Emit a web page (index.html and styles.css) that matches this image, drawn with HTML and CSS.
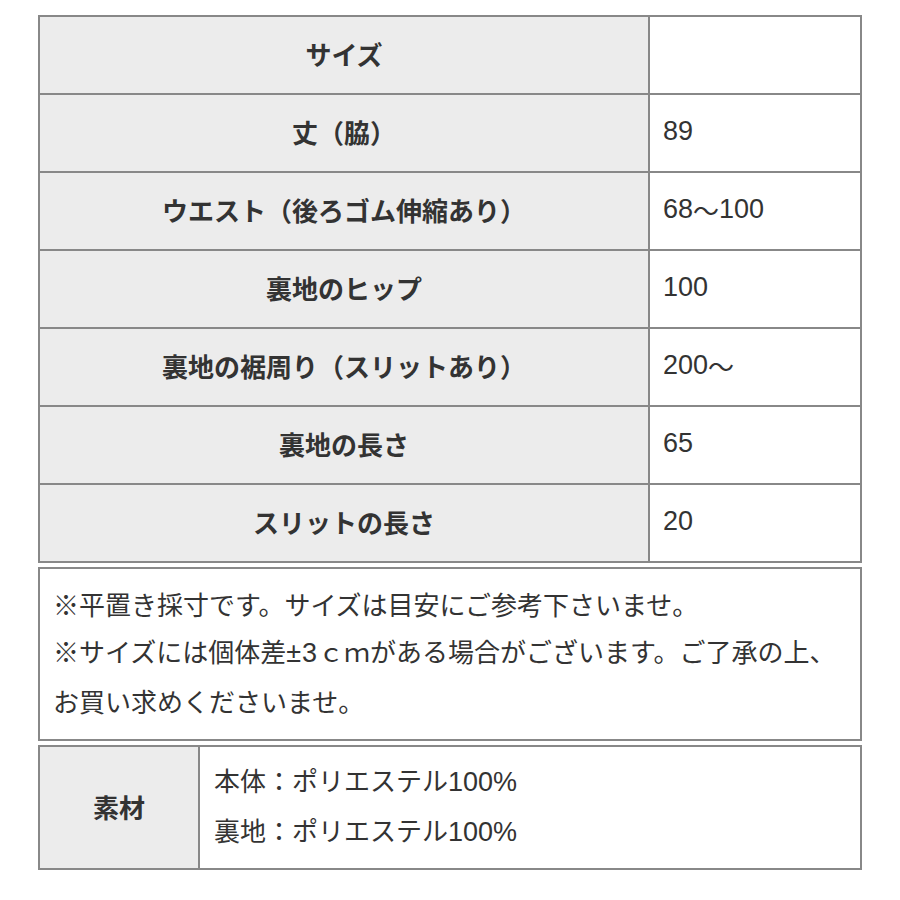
FILE: index.html
```html
<!DOCTYPE html>
<html lang="ja">
<head>
<meta charset="utf-8">
<link rel="stylesheet" href="styles.css">
</head>
<body>
<div class="page">
  <div class="size-grid">
    <div class="label">サイズ</div><div class="value"></div>
    <div class="label">丈（脇）</div><div class="value"><span class="num">89</span></div>
    <div class="label">ウエスト（後ろゴム伸縮あり）</div><div class="value"><span class="num">68</span>〜<span class="num">100</span></div>
    <div class="label">裏地のヒップ</div><div class="value"><span class="num">100</span></div>
    <div class="label">裏地の裾周り（スリットあり）</div><div class="value"><span class="num">200</span>〜</div>
    <div class="label">裏地の長さ</div><div class="value"><span class="num">65</span></div>
    <div class="label">スリットの長さ</div><div class="value"><span class="num">20</span></div>
  </div>
  <div class="notes">
    <p>※平置き採寸です。サイズは目安にご参考下さいませ。</p>
    <p>※サイズには個体差<span class="latin">±3</span>ｃｍがある場合がございます。ご了承の上、</p>
    <p>お買い求めくださいませ。</p>
  </div>
  <div class="material-grid">
    <div class="label">素材</div>
    <div class="value multi">
      <p>本体：ポリエステル<span class="num">100%</span></p>
      <p>裏地：ポリエステル<span class="num">100%</span></p>
    </div>
  </div>
</div>
</body>
</html>
```
FILE: styles.css
```css
html, body {
  margin: 0;
  padding: 0;
  background: #ffffff;
}
body {
  font-family: "Noto Sans CJK JP", "Liberation Sans", sans-serif;
  color: #333333;
  font-size: 26px;
}
.page {
  width: 824px;
  margin: 0 auto;
  padding-top: 15px;
  display: flex;
  flex-direction: column;
  gap: 4px;
}
.size-grid {
  display: grid;
  grid-template-columns: 608px 1fr;
  grid-auto-rows: 76px;
  gap: 2px;
  padding: 2px;
  background: #888888;
}
.label {
  background: #ececec;
  font-weight: bold;
  display: flex;
  align-items: center;
  justify-content: center;
  padding-bottom: 3px;
}
.value {
  background: #ffffff;
  display: flex;
  align-items: center;
  padding-left: 13px;
  padding-bottom: 3px;
}
.num {
  font-family: "Liberation Sans", sans-serif;
  font-size: 27px;
}
.latin {
  font-family: "Liberation Sans", sans-serif;
  font-size: 27px;
  letter-spacing: 1px;
}
.notes {
  border: 2px solid #888888;
  height: 159px;
  padding: 11px 0 0 13px;
  white-space: nowrap;
}
.notes p, .multi p {
  margin: 0;
  line-height: 47px;
}
.material-grid {
  display: grid;
  grid-template-columns: 158px 1fr;
  grid-template-rows: 121px;
  gap: 2px;
  padding: 2px;
  background: #888888;
}
.multi {
  flex-direction: column;
  align-items: flex-start;
  justify-content: center;
  padding-left: 14px;
  padding-bottom: 4px;
}
```
